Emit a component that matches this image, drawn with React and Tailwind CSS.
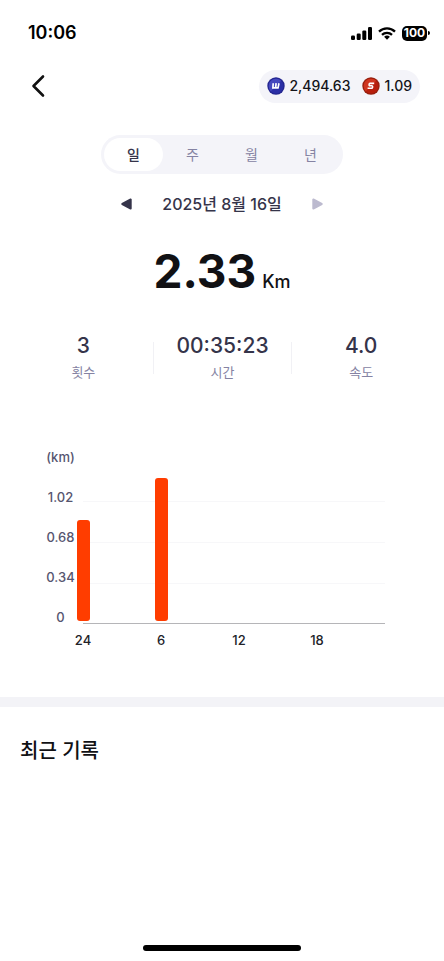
import { useState } from "react";

const periods = ["일", "주", "월", "년"];

const stats = [
	{ label: "횟수", value: "3" },
	{ label: "시간", value: "00:35:23" },
	{ label: "속도", value: "4.0" },
];

const yLabels = ["(km)", "1.02", "0.68", "0.34", "0"];

// bar heights are in km, the axis runs up to 1.36
const hours = [
	{ hour: "24", km: 0.86 },
	{ hour: "6", km: 1.22 },
	{ hour: "12", km: 0 },
	{ hour: "18", km: 0 },
];
const MAX_KM = 1.36;

function StatusBar() {
	return (
		<div className="flex h-16 items-center justify-between pt-0.5 pr-3.5 pl-7">
			<span className="text-lg font-semibold text-black">10:06</span>
			<div className="flex items-center gap-1.5">
				<svg width="21" height="13" viewBox="0 0 21 13" aria-hidden="true">
					<rect x="0" y="8.5" width="4" height="4.5" rx="1.2" />
					<rect x="5.7" y="6.5" width="4" height="6.5" rx="1.2" />
					<rect x="11.3" y="3.5" width="4" height="9.5" rx="1.2" />
					<rect x="17" y="0" width="4" height="13" rx="1.2" />
				</svg>
				<svg width="18" height="13" viewBox="0 0 18 13" aria-hidden="true">
					<g fill="none" stroke="#000" strokeWidth="2.3">
						<path d="M1 4.6a11.4 11.4 0 0 1 16 0" />
						<path d="M4 7.8a7.2 7.2 0 0 1 10 0" />
					</g>
					<path d="M9 12.8 6.1 9.8a4.2 4.2 0 0 1 5.8 0z" />
				</svg>
				<div className="flex items-center gap-px">
					<span className="flex h-[15px] w-[25px] items-center justify-center rounded-[5px] bg-black text-xs font-bold text-white">
						100
					</span>
					<span className="h-1 w-0.5 rounded-r-full bg-black" />
				</div>
			</div>
		</div>
	);
}

function WCoin() {
	return (
		<svg width="18" height="18" viewBox="0 0 18 18" aria-hidden="true">
			<circle cx="9" cy="9" r="8.7" fill="#24268f" />
			<circle cx="9" cy="9" r="7.4" fill="#2b2fa6" />
			<path d="M3.8 3.8A7.4 7.4 0 0 1 14.2 3.8L3.8 14.2A7.4 7.4 0 0 1 3.8 3.8z" fill="#4549be" />
			<path
				d="M6.2 6.2 5.9 10.9H11l1-4.7M9.1 6.2 8.7 10.4"
				fill="none"
				stroke="#fff"
				strokeWidth="1.7"
			/>
		</svg>
	);
}

function SCoin() {
	return (
		<svg width="18" height="18" viewBox="0 0 18 18" aria-hidden="true">
			<circle cx="9" cy="9" r="8.7" fill="#96200f" />
			<circle cx="9" cy="9" r="7.4" fill="#b81e0c" />
			<path d="M3.8 3.8A7.4 7.4 0 0 1 14.2 3.8L3.8 14.2A7.4 7.4 0 0 1 3.8 3.8z" fill="#cf3620" />
			<path
				d="M12.2 6.4H8Q7.2 6.4 7.1 7.5 7 8.8 8 8.8H9.8Q10.8 8.8 10.6 10 10.4 11.3 9.6 11.3H5.6"
				fill="none"
				stroke="#fff"
				strokeWidth="1.6"
			/>
		</svg>
	);
}

function DistanceChart() {
	return (
		<div className="mt-[54px] mr-[59px] ml-11 flex gap-1.5">
			<div className="w-[33px] shrink-0 text-center text-[13px] font-medium text-[#56556f]">
				{yLabels.map((label) => (
					<div key={label} className="flex h-10 items-center justify-center">
						{label}
					</div>
				))}
			</div>
			<div className="relative mt-6 min-w-0 flex-1">
				{/* Grid lines */}
				<div className="h-10 border-b border-[#f7f7f9]" />
				<div className="h-[41px] border-b border-[#f7f7f9]" />
				<div className="h-[41px] border-b border-[#f7f7f9]" />
				<div className="h-10 border-b border-[#b5b5b8]" />

				{/* Bars stand over the grid, the first one centred on the axis start */}
				<div className="absolute top-0 right-[29px] left-[-39px] grid grid-cols-4">
					{hours.map((item) => (
						<div key={item.hour} className="flex flex-col items-center">
							<div className="flex h-[159px] items-end">
								<div
									className="w-[13px] rounded-[3px] bg-[#ff3d00]"
									style={{ height: `${(item.km / MAX_KM) * 100}%` }}
								/>
							</div>
							<span className="mt-[9px] text-[13px] leading-5 font-medium text-[#222228]">
								{item.hour}
							</span>
						</div>
					))}
				</div>
			</div>
		</div>
	);
}

export default function App() {
	const [period, setPeriod] = useState("일");

	return (
		<div className="flex min-h-screen flex-col bg-white font-['Inter','Noto_Sans_CJK_KR',sans-serif]">
			<StatusBar />

			{/* Header */}
			<header className="flex h-11 items-center justify-between pr-6 pl-7">
				<button type="button" aria-label="뒤로" className="flex h-8 w-8 items-center">
					<svg width="20" height="24" viewBox="0 0 20 24" aria-hidden="true">
						<path
							d="M15 2.5 5.5 12l9.5 9.5"
							fill="none"
							stroke="#111"
							strokeWidth="2.6"
							strokeLinecap="round"
							strokeLinejoin="round"
						/>
					</svg>
				</button>
				<div className="flex h-[33px] items-center gap-3 rounded-full bg-[#f4f4f9] px-2 text-sm font-medium text-[#15151a]">
					<span className="flex items-center gap-1">
						<WCoin />
						2,494.63
					</span>
					<span className="flex items-center gap-1">
						<SCoin />
						1.09
					</span>
				</div>
			</header>

			<main>
				{/* Period tabs */}
				<div className="mx-auto mt-[27px] flex w-fit rounded-full bg-[#f4f4f9] p-[3px]">
					{periods.map((item) => (
						<button
							key={item}
							type="button"
							aria-pressed={period === item}
							onClick={() => setPeriod(item)}
							className={`h-[33px] w-[59px] rounded-full text-sm ${
								period === item
									? "bg-white font-medium text-[#35344a]"
									: "text-[#8583a3]"
							}`}>
							{item}
						</button>
					))}
				</div>

				{/* Date */}
				<div className="mt-4 flex h-7 items-center justify-center gap-[30px]">
					<button type="button" aria-label="이전 날짜">
						<svg width="11" height="12" viewBox="0 0 11 12" aria-hidden="true">
							<path d="M9.7 1.5v9L1.3 6z" fill="#35344a" stroke="#35344a" strokeWidth="2" strokeLinejoin="round" />
						</svg>
					</button>
					<span className="text-base font-medium text-[#35344a]">
						2025년 8월 16일
					</span>
					<button type="button" aria-label="다음 날짜">
						<svg width="11" height="12" viewBox="0 0 11 12" aria-hidden="true">
							<path d="M1.3 1.5v9L9.7 6z" fill="#bcbacf" stroke="#bcbacf" strokeWidth="2" strokeLinejoin="round" />
						</svg>
					</button>
				</div>

				{/* Distance */}
				<div className="mt-7 flex items-baseline justify-center gap-1.5 text-[#111114]">
					<span className="text-[46px] leading-[50px] font-bold">2.33</span>
					<span className="text-lg font-medium">Km</span>
				</div>

				{/* Stats */}
				<div className="mx-3.5 mt-9 flex items-center">
					{stats.map((stat, i) => (
						<div key={stat.label} className="flex flex-1 items-center">
							{i > 0 && <span className="h-8 w-px bg-[#f1f1f5]" />}
							<div className="flex-1 text-center">
								<p className="text-[21px] leading-7 font-medium text-[#35344a]">
									{stat.value}
								</p>
								<p className="text-[13px] leading-6 text-[#8583a3]">
									{stat.label}
								</p>
							</div>
						</div>
					))}
				</div>

				<DistanceChart />

				{/* Recent records */}
				<section className="mt-[59px] border-t-10 border-[#f3f3f7] px-5 pt-7">
					<h2 className="text-xl leading-8 font-medium text-[#111114]">최근 기록</h2>
				</section>
			</main>

			<div className="mx-auto mt-auto mb-2.5 h-1.5 w-[158px] rounded-full bg-black" />
		</div>
	);
}
